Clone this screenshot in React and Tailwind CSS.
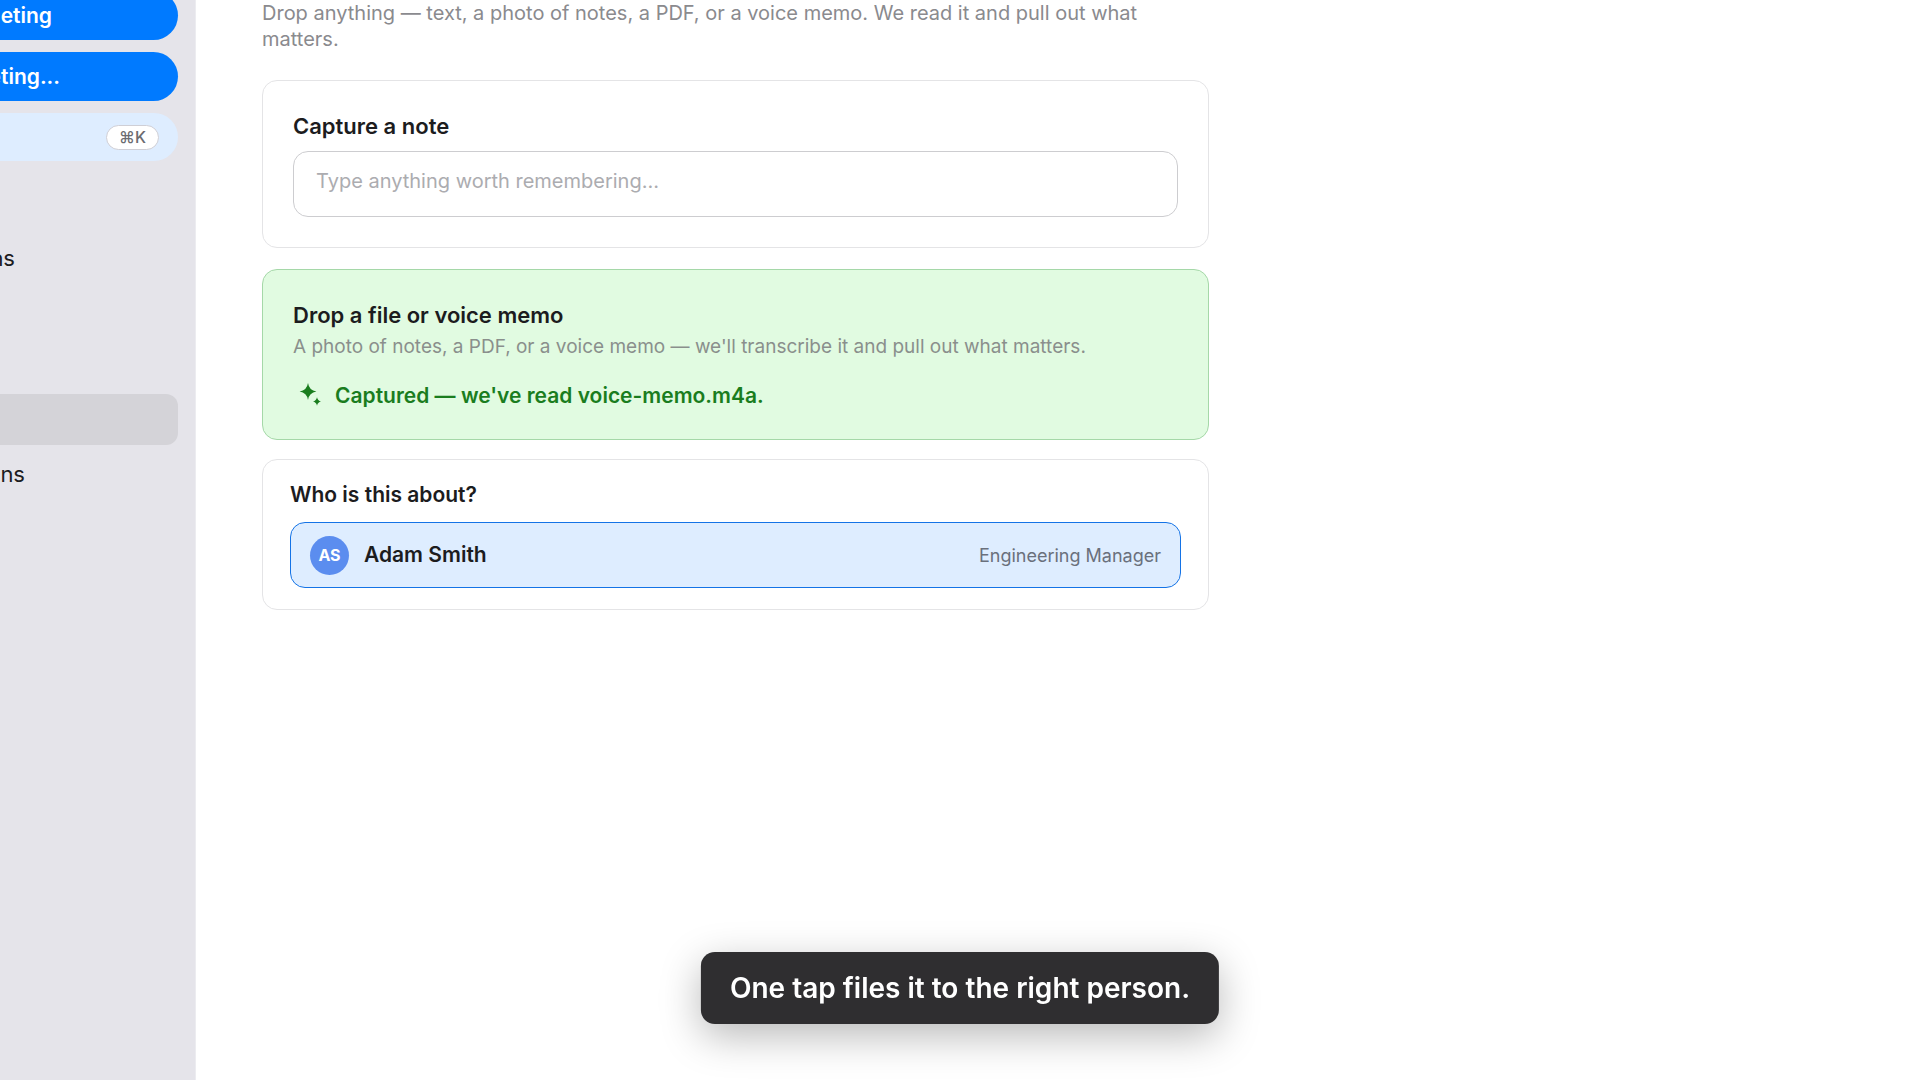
import React from 'react';
import { clsx } from 'clsx';

const navItems = [
    { id: 'first', label: 'ns', pad: 'pr-[163px]' },
    { id: 'second', label: '', pad: 'pr-4' },
    { id: 'third', label: '', pad: 'pr-4' },
    { id: 'capture', label: '', pad: 'pr-4', active: true },
    { id: 'last', label: 'ns', pad: 'pr-[153px]' },
];

const SparkleIcon = ({ className }) => (
    <svg className={className} viewBox="0 0 22 26" fill="currentColor" aria-hidden="true">
        <path d="M9 0 Q10.1 7.4 17.4 8.5 Q10.1 9.6 9 17 Q7.9 9.6 0.6 8.5 Q7.9 7.4 9 0Z" />
        <path d="M18 14.3 Q18.7 17.8 22 18.5 Q18.7 19.2 18 22.7 Q17.3 19.2 14 18.5 Q17.3 17.8 18 14.3Z" />
    </svg>
);

const Sidebar = () => (
    <aside className="w-[196px] shrink-0 overflow-hidden border-r border-[#ececf0] bg-[#e5e4ea] pr-[17px]">
        <div className="-mt-[9px] flex flex-col gap-3">
            <button className="flex h-[49px] items-center justify-end whitespace-nowrap rounded-r-full bg-[#007aff] pr-[126px] text-[21px] font-semibold text-white">
                eting
            </button>
            <button className="flex h-[49px] items-center justify-end whitespace-nowrap rounded-r-full bg-[#007aff] pr-[118px] text-[21px] font-semibold text-white">
                eting...
            </button>
            <button className="flex h-12 items-center justify-end rounded-r-full bg-[#deedff] pr-[19px]">
                <kbd className="flex h-[25px] w-[53px] items-center justify-center rounded-full border border-[#cfcfd6] bg-white font-[Inter,sans-serif] text-[16px] font-medium text-[#6b6b70]">
                    ⌘K
                </kbd>
            </button>
        </div>

        <nav className="mt-[71px] flex flex-col gap-[3px]">
            {navItems.map((item) => (
                <button
                    key={item.id}
                    className={clsx(
                        'flex h-[51px] items-center justify-end whitespace-nowrap rounded-r-xl pt-0.5 text-[22px] text-[#1c1c1e]',
                        item.pad,
                        item.active && 'bg-[#d4d3d8]'
                    )}
                >
                    {item.label}
                </button>
            ))}
        </nav>
    </aside>
);

const App = () => {
    return (
        <div className="flex min-h-screen bg-white font-[Inter,sans-serif] text-[#1c1c1e]">
            <Sidebar />

            <main className="min-w-0 flex-1 px-[66px] pb-10">
                <div className="max-w-[947px]">
                    <p className="text-[20px] leading-[26px] text-[#8a8a8e]">
                        Drop anything — text, a photo of notes, a PDF, or a voice memo. We read it and pull out what matters.
                    </p>

                    {/* Note */}
                    <section className="mt-7 flex flex-col rounded-[15px] border border-[#e4e4e6] px-[30px] pt-8 pb-[30px]">
                        <label htmlFor="note" className="text-[22px] leading-[26px] font-semibold">
                            Capture a note
                        </label>
                        <textarea
                            id="note"
                            rows={1}
                            placeholder="Type anything worth remembering…"
                            className="mt-3 h-[66px] w-full resize-none rounded-[15px] border border-[#cdcdd0] bg-white px-[22px] py-4 text-[20px] leading-[26px] placeholder:text-[#acacb0]"
                        />
                    </section>

                    {/* File drop */}
                    <section className="mt-[21px] rounded-[15px] border border-[#a5d8a8] bg-[#e1fbe1] px-[30px] pt-8 pb-[30px]">
                        <h2 className="text-[22px] leading-[26px] font-semibold">Drop a file or voice memo</h2>
                        <p className="mt-[7px] text-[19px] leading-6 text-[#8a8f8c]">
                            A photo of notes, a PDF, or a voice memo — we'll transcribe it and pull out what matters.
                        </p>
                        <p className="mt-6 flex items-center gap-3.5 pl-1.5 text-[21px] leading-[26px] font-semibold text-[#1a7d1e]">
                            <SparkleIcon className="h-[26px] w-[22px]" />
                            Captured — we've read voice-memo.m4a.
                        </p>
                    </section>

                    {/* Person picker */}
                    <section className="mt-[19px] rounded-[15px] border border-[#e4e4e6] px-[27px] pt-[22px] pb-[21px]">
                        <h2 className="text-[21px] leading-[26px] font-semibold">Who is this about?</h2>
                        <button className="mt-3.5 flex h-[66px] w-full items-center gap-[15px] rounded-[15px] border border-[#1473e6] bg-[#deedff] px-[19px] text-left">
                            <span className="flex size-[39px] items-center justify-center rounded-full bg-[#5b8def] text-[16px] font-bold text-white">
                                AS
                            </span>
                            <span className="flex-1 text-[21px] font-semibold">Adam Smith</span>
                            <span className="text-[18px] text-[#6a707c]">Engineering Manager</span>
                        </button>
                    </section>
                </div>
            </main>

            <div
                role="status"
                className="fixed bottom-14 left-1/2 flex h-[72px] -translate-x-1/2 items-center rounded-[14px] bg-[#2f2e30] px-[29px] text-[28px] font-semibold whitespace-nowrap text-white shadow-[0_12px_40px_rgba(0,0,0,0.28)]"
            >
                One tap files it to the right person.
            </div>
        </div>
    );
};

export default App;
